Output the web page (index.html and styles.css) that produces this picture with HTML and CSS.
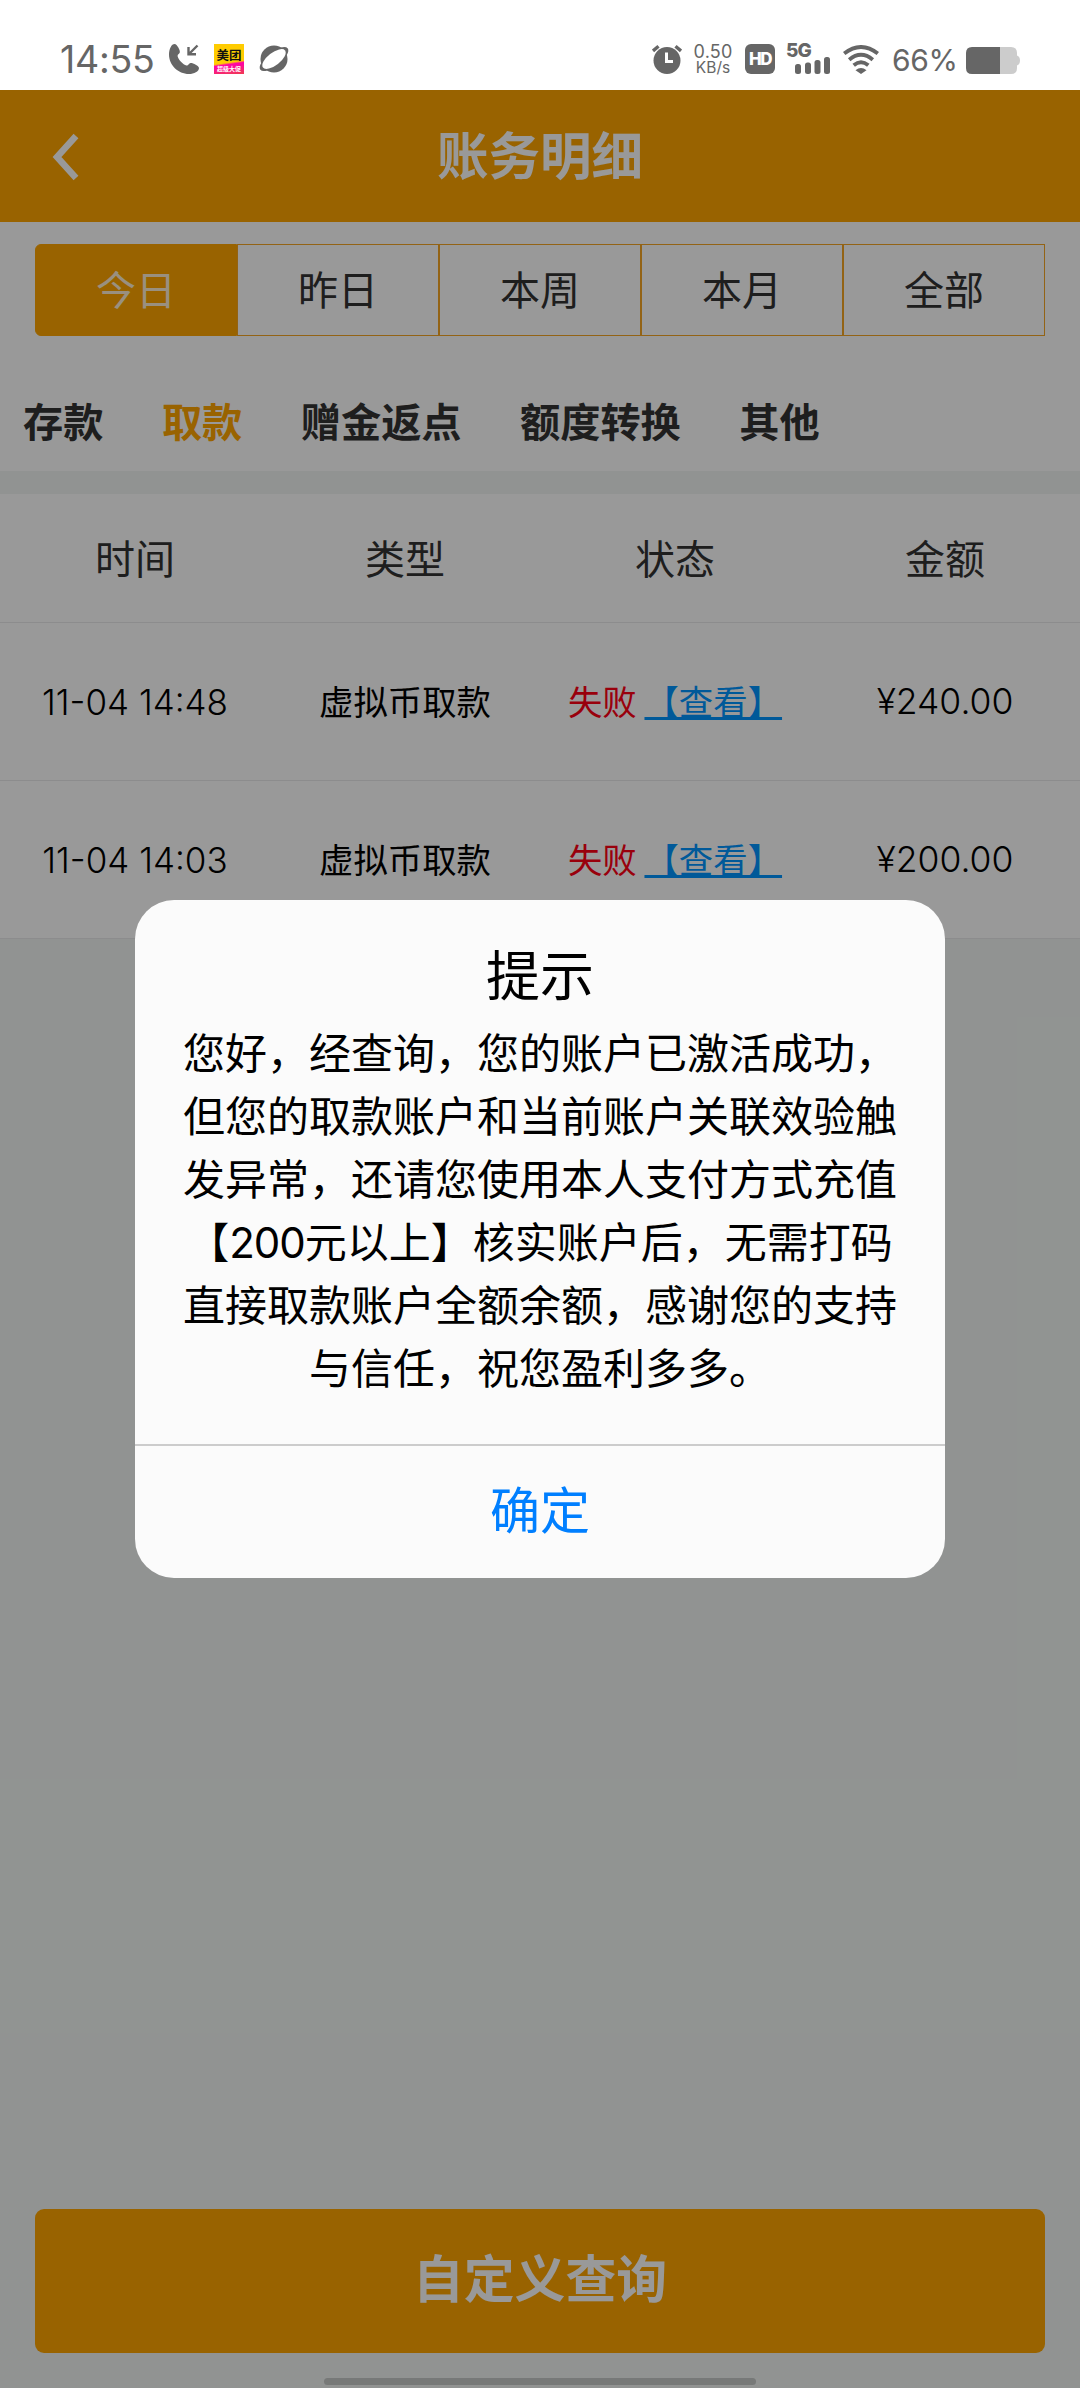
FILE: index.html
```html
<!DOCTYPE html>
<html lang="zh-CN">
<head>
<meta charset="utf-8">
<title>账务明细</title>
<link rel="stylesheet" href="styles.css">
</head>
<body>
<div class="statusbar">
  <div class="status-left">
    <span class="clock">14:55</span>
    <svg class="icon-phone" width="30" height="30" viewBox="0 0 30 30">
      <path d="M5.600 0C8 0 11.500 6.500 10.800 8.500C10.300 10 8.300 10.500 8.600 12.200C9.300 15.500 14 20.700 17.500 21.400C19.500 21.700 19.800 19.200 21.500 18.900C23.500 18.600 30 21.500 30 24C30 27.500 25 30 20 30C9 30 0 21 0 10.500C0 5 2.500 0 5.600 0Z" fill="#666"/>
      <path d="M28.500 1.500L20 10M19.500 3V10.300H27" fill="none" stroke="#666" stroke-width="2.400"/>
    </svg>
    <span class="app-badge"><span class="app-name">美团</span><span class="app-sale">超级大促</span></span>
    <svg class="icon-planet" width="30" height="30" viewBox="0 0 30 30">
      <circle cx="15" cy="15" r="13.500" fill="#666"/>
      <ellipse cx="15" cy="15" rx="17.300" ry="7" transform="rotate(-38 15 15)" fill="#666"/>
      <ellipse cx="15" cy="15" rx="14" ry="6.300" transform="rotate(-38 15 15)" fill="#fff"/>
    </svg>
  </div>
  <div class="status-right">
    <svg class="icon-alarm" width="30" height="30" viewBox="0 0 30 30">
      <circle cx="15" cy="16.500" r="13.500" fill="#666"/>
      <path d="M1 7L6.500 2.300M29 7L23.500 2.300" stroke="#666" stroke-width="3.400"/>
      <path d="M14.500 8.500V17.500H21" fill="none" stroke="#fff" stroke-width="3"/>
    </svg>
    <span class="netspeed"><span class="speed">0.50</span><span class="unit">KB/s</span></span>
    <span class="hd">HD</span>
    <span class="signal">
      <span class="gen">5G</span>
      <svg width="36" height="17" viewBox="0 0 36 17" fill="#666">
        <rect x="0" y="7" width="6" height="10" rx="2.500"/>
        <rect x="10" y="5.500" width="6" height="11.500" rx="2.500"/>
        <rect x="19.500" y="3" width="6" height="14" rx="2.500"/>
        <rect x="29" y="0" width="6" height="17" rx="2.500"/>
      </svg>
    </span>
    <svg class="icon-wifi" width="36" height="29" viewBox="0 0 36 29">
      <path d="M1.200 8.500Q18 -4.500 34.800 8.500M6.200 14.700Q18 5 29.800 14.700M10.700 20.300Q18 14.300 25.300 20.300" fill="none" stroke="#666" stroke-width="3.900"/>
      <path d="M12.500 25.300Q18 20.800 23.500 25.300L18 29Z" fill="#666"/>
    </svg>
    <span class="percent">66%</span>
    <svg class="icon-battery" width="54" height="27" viewBox="0 0 54 27">
      <path d="M34 0H45Q51 0 51 6V8.500Q54 9.500 54 13.500T51 18.500V21Q51 27 45 27H34Z" fill="#ccc"/>
      <path d="M34 0H6Q0 0 0 6V21Q0 27 6 27H34Z" fill="#666"/>
    </svg>
  </div>
</div>

<div class="page">
  <header class="navbar">
    <svg class="back" width="30" height="48" viewBox="0 0 30 48">
      <path d="M26 3L7 24L26 45" fill="none" stroke="#fff" stroke-width="6.500"/>
    </svg>
    <h1 class="nav-title">账务明细</h1>
  </header>

  <div class="periods">
    <div class="period active">今日</div>
    <div class="period">昨日</div>
    <div class="period">本周</div>
    <div class="period">本月</div>
    <div class="period">全部</div>
  </div>

  <nav class="kinds">
    <span>存款</span>
    <span class="current">取款</span>
    <span>赠金返点</span>
    <span>额度转换</span>
    <span>其他</span>
  </nav>

  <div class="records">
    <div class="row head"><span>时间</span><span>类型</span><span>状态</span><span>金额</span></div>
    <div class="row">
      <span class="time">11-04 14:48</span><span>虚拟币取款</span>
      <span><em class="fail">失败</em> <a class="view">【查看】</a></span><span class="amount">¥240.00</span>
    </div>
    <div class="row">
      <span class="time">11-04 14:03</span><span>虚拟币取款</span>
      <span><em class="fail">失败</em> <a class="view">【查看】</a></span><span class="amount">¥200.00</span>
    </div>
  </div>

  <button class="custom-query">自定义查询</button>

  <div class="mask">
    <div class="dialog">
      <div class="dialog-title">提示</div>
      <p class="dialog-text">您好，经查询，您的账户已激活成功，<br>但您的取款账户和当前账户关联效验触<br>发异常，还请您使用本人支付方式充值<br>【<span class="num">200</span>元以上】核实账户后，无需打码<br>直接取款账户全额余额，感谢您的支持<br>与信任，祝您盈利多多。</p>
      <div class="dialog-ok">确定</div>
    </div>
  </div>
  <div class="home-bar"></div>
</div>
</body>
</html>
```
FILE: styles.css
```css
* { box-sizing: border-box; }

body {
  margin: 0;
  width: 1080px;
  height: 2388px;
  display: flex;
  flex-direction: column;
  overflow: hidden;
  background: #fff;
  color: #333;
  font-family: "Noto Sans CJK SC", sans-serif;
  font-weight: 400;
  text-spacing-trim: space-all;
}

/* system status bar */
.statusbar {
  height: 90px;
  flex: none;
  display: flex;
  justify-content: space-between;
  align-items: flex-start;
  padding: 44px 60px 0 60px;
  color: #666;
  font-family: Inter, sans-serif;
}
.status-left, .status-right { display: flex; align-items: flex-start; height: 30px; }
.clock { width: 109px; font-size: 37.5px; line-height: 31px; white-space: nowrap; letter-spacing: -0.3px; }
.icon-phone { margin-right: 15px; }
.icon-planet { margin-left: 15px; overflow: visible; }
.app-badge {
  width: 30px;
  height: 30px;
  overflow: hidden;
  background: linear-gradient(172deg, #fc0 60%, #f0a 66%, #f03b50 100%);
  font-family: "Noto Sans CJK SC", sans-serif;
  text-align: center;
}
.app-name { display: block; font-size: 12.5px; line-height: 21px; font-weight: 700; color: #111; }
.app-sale { display: block; font-size: 6px; line-height: 8px; font-weight: 700; color: #fff; white-space: nowrap; }

.netspeed { width: 38px; margin-left: 12px; display: flex; flex-direction: column; align-items: center; }
.speed { font-size: 18px; line-height: 15px; letter-spacing: 0.2px; }
.unit { font-size: 15.5px; line-height: 18px; }
.hd {
  width: 30px;
  height: 30px;
  margin-left: 13px;
  border-radius: 6px;
  background: #666;
  color: #fff;
  font-size: 17px;
  line-height: 31px;
  font-weight: 800;
  text-align: center;
  letter-spacing: -1.5px;
}
.signal { width: 45px; height: 30px; margin-left: 11px; display: flex; flex-direction: column; align-items: flex-end; }
.gen { align-self: flex-start; font-size: 19px; line-height: 14px; height: 13px; font-weight: 800; letter-spacing: -1px; }
.icon-wifi { margin: 1px 0 0 12px; }
.percent { width: 87px; padding-left: 13px; font-size: 30px; line-height: 32px; letter-spacing: -0.4px; white-space: nowrap; }
.icon-battery { margin-top: 3px; }

/* page */
.page {
  position: relative;
  flex: 1;
  display: flex;
  flex-direction: column;
  background: #f2f6f4;
}
.navbar {
  height: 132px;
  flex: none;
  display: grid;
  grid-template-columns: 130px 1fr 130px;
  align-items: center;
  background: #ffa600;
  color: #fff;
}
.back { margin: 1px 0 0 50px; }
.nav-title { margin: 0; font-size: 51.5px; line-height: 76px; font-weight: 700; text-align: center; padding-bottom: 7px; }

.periods {
  flex: none;
  display: flex;
  padding: 22px 35px 0;
  background: #fff;
}
.period {
  flex: 1;
  height: 92px;
  border: 1px solid #f5a623;
  font-size: 40px;
  line-height: 86px;
  text-align: center;
}
.period.active { background: #ffa600; color: #fff0d5; border-color: #ffa600; border-radius: 6px 0 0 6px; }

.kinds {
  flex: none;
  height: 135px;
  display: flex;
  gap: 58.5px;
  padding: 55px 23px 0;
  background: #fff;
  font-size: 40.2px;
  line-height: 58px;
  font-weight: 700;
}
.kinds .current { color: #ffa600; }

.records { flex: none; margin-top: 23px; background: #fff; }
.row {
  display: grid;
  grid-template-columns: repeat(4, 1fr);
  height: 158px;
  padding-bottom: 3px;
  border-bottom: 1px solid #e9eaec;
  align-items: center;
  text-align: center;
  color: #000;
  font-size: 34.4px;
  line-height: 50px;
  white-space: nowrap;
}
.row.head { height: 129px; font-size: 40px; color: #333; }
.time, .amount { padding-top: 3px; font-family: Inter, sans-serif; font-weight: 350; font-size: 35px; }
.amount { font-size: 35.5px; }
.fail { font-style: normal; color: #ff0015; }
.view { color: #0095ff; text-decoration: underline; text-decoration-thickness: 3px; text-underline-offset: 2px; }

.custom-query {
  margin: auto 35px 35px;
  height: 144px;
  flex: none;
  padding: 0 0 8px;
  border: 0;
  border-radius: 9px;
  background: #ffa600;
  color: #fff;
  font: 700 50.8px/1.4 "Noto Sans CJK SC", sans-serif;
}

/* prompt dialog over the page */
.mask {
  position: absolute;
  inset: 0;
  display: flex;
  justify-content: center;
  align-items: center;
  background: rgba(0, 0, 0, 0.4);
}
.dialog {
  width: 810px;
  height: 678px;
  display: flex;
  flex-direction: column;
  border-radius: 39px;
  background: #fbfbfb;
  color: #000;
  text-align: center;
}
.dialog-title { padding-top: 35px; font-size: 54px; line-height: 76px; }
.dialog-text { flex: 1; margin: 8px 0 0; font-size: 42px; line-height: 63px; white-space: nowrap; }
.num { font-family: Inter, sans-serif; line-height: 0; letter-spacing: -1px; }
.dialog-ok { height: 134px; padding-top: 24px; border-top: 2px solid #ccc; font-size: 50px; line-height: 74px; color: #007fff; }

.home-bar {
  position: absolute;
  left: 324px;
  bottom: 3px;
  width: 432px;
  height: 7px;
  border-radius: 4px;
  background: #777978;
}
```
